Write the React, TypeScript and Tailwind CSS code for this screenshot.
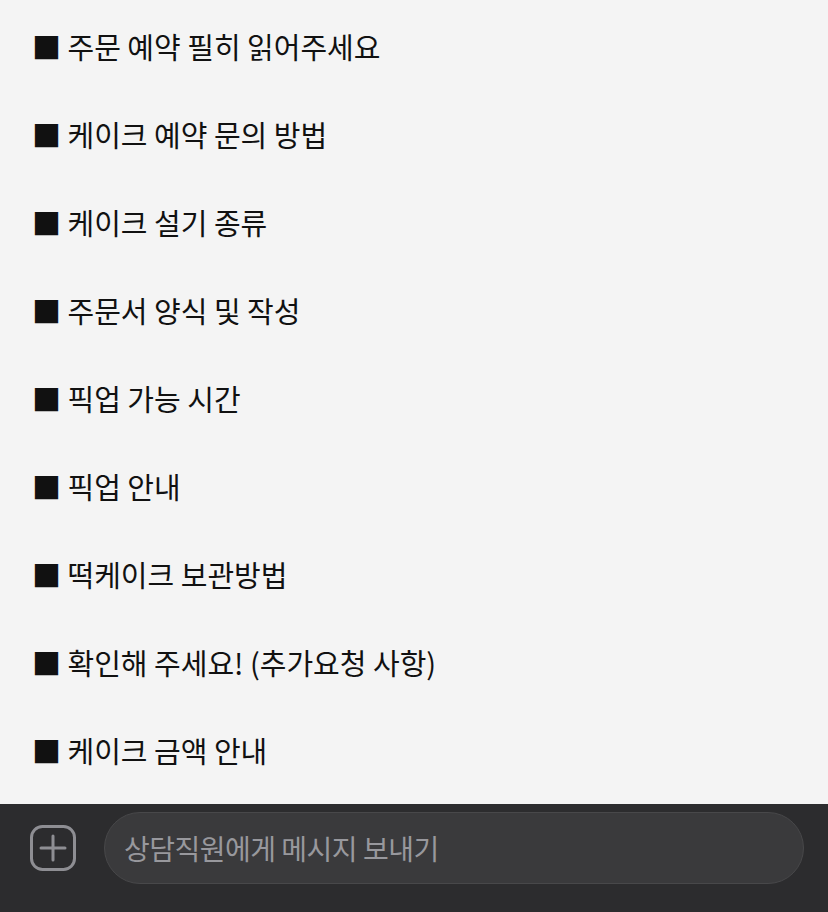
const ITEMS = [
  '주문 예약 필히 읽어주세요',
  '케이크 예약 문의 방법',
  '케이크 설기 종류',
  '주문서 양식 및 작성',
  '픽업 가능 시간',
  '픽업 안내',
  '떡케이크 보관방법',
  '확인해 주세요! (추가요청 사항)',
  '케이크 금액 안내',
];

export default function App() {
  return (
    <div className="w-[828px] h-[912px] flex flex-col bg-[#f4f4f4] font-['Noto_Sans_CJK_KR','Noto_Sans',sans-serif] overflow-hidden">
      {/* 메뉴 목록 */}
      <div className="flex-1 flex flex-col pt-[3px]">
        {ITEMS.map((t) => (
          <div key={t} className="h-[88px] flex items-center pl-[32px] text-[29px] text-[#111] tracking-[0px]">
            ■ {t}
          </div>
        ))}
      </div>

      {/* 입력창 */}
      <div className="h-[108px] bg-[#2c2c2e] flex items-start pt-[8px]">
        <div className="w-[104px] h-[72px] flex items-center justify-center pl-[1px]">
          <svg width="46" height="46" viewBox="0 0 46 46" fill="none" stroke="#8e8e93" strokeWidth="3" strokeLinecap="round">
            <rect x="1.5" y="1.5" width="43" height="43" rx="11" />
            <path d="M23 11v24M11 23h24" />
          </svg>
        </div>
        <div className="w-[700px] h-[72px] rounded-full bg-[#3a3a3c] border border-[#48484a] flex items-center pl-[19px] text-[28px] text-[#98989d] tracking-[-0.5px]">
          상담직원에게 메시지 보내기
        </div>
      </div>
    </div>
  );
}
